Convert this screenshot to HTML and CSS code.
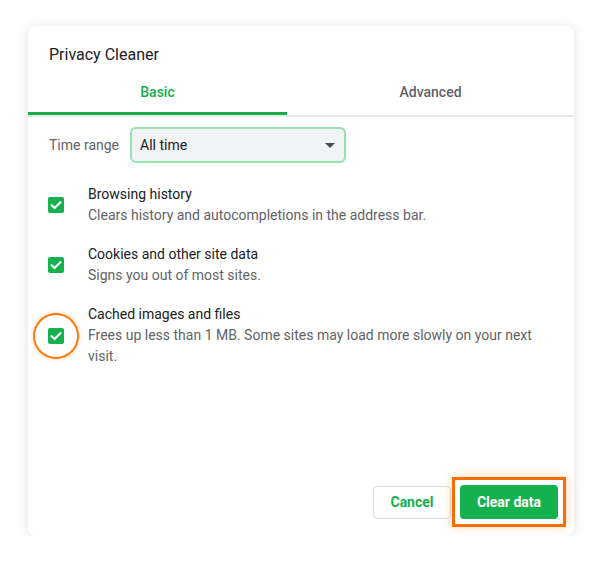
FILE: index.html
```html
<!DOCTYPE html>
<html lang="en">
<head>
<meta charset="utf-8">
<title>Privacy Cleaner</title>
<link rel="stylesheet" href="styles.css">
</head>
<body>
<div class="card">
  <div class="title">Privacy Cleaner</div>
  <div class="tabs">
    <div class="tab tab-active">Basic</div>
    <div class="tab tab-advanced">Advanced</div>
  </div>
  <div class="range">
    <span class="range-label">Time range</span>
    <div class="select">
      <span>All time</span>
      <span class="arrow"></span>
    </div>
  </div>
  <div class="items">
    <div class="item">
      <div class="cb-wrap"><span class="cb"><svg viewBox="0 0 16 16" width="16" height="16"><path d="M3.6 8.2 L6.6 11 L12.4 5.2" fill="none" stroke="#fff" stroke-width="2.2" stroke-linecap="round" stroke-linejoin="round"/></svg></span></div>
      <div class="item-text">
        <div class="item-title">Browsing history</div>
        <div class="item-desc">Clears history and autocompletions in the address bar.</div>
      </div>
    </div>
    <div class="item">
      <div class="cb-wrap"><span class="cb"><svg viewBox="0 0 16 16" width="16" height="16"><path d="M3.6 8.2 L6.6 11 L12.4 5.2" fill="none" stroke="#fff" stroke-width="2.2" stroke-linecap="round" stroke-linejoin="round"/></svg></span></div>
      <div class="item-text">
        <div class="item-title">Cookies and other site data</div>
        <div class="item-desc">Signs you out of most sites.</div>
      </div>
    </div>
    <div class="item">
      <div class="cb-wrap"><span class="cb"><svg viewBox="0 0 16 16" width="16" height="16"><path d="M3.6 8.2 L6.6 11 L12.4 5.2" fill="none" stroke="#fff" stroke-width="2.2" stroke-linecap="round" stroke-linejoin="round"/></svg></span><span class="ring"></span></div>
      <div class="item-text">
        <div class="item-title">Cached images and files</div>
        <div class="item-desc">Frees up less than 1 MB. Some sites may load more slowly on your next visit.</div>
      </div>
    </div>
  </div>
  <div class="footer">
    <button class="btn btn-cancel">Cancel</button>
    <div class="primary-wrap">
      <button class="btn btn-primary">Clear data</button>
      <span class="highlight"></span>
    </div>
  </div>
</div>
</body>
</html>
```

FILE: styles.css
```css
* { box-sizing: border-box; }
html, body {
  margin: 0;
  padding: 0;
  background: #ffffff;
}
body {
  font-family: Roboto, "Liberation Sans", Arial, sans-serif;
  color: #202124;
  padding: 26px 0 0 28px;
}
.card {
  width: 546px;
  height: 510px;
  background: #fff;
  border-radius: 8px;
  box-shadow: 0 1px 12px rgba(0, 0, 0, 0.13);
  display: flex;
  flex-direction: column;
}
.title {
  padding: 19px 21px 0;
  font-size: 16px;
  line-height: 20px;
  color: #202124;
}
.tabs {
  margin-top: 7px;
  display: flex;
  border-bottom: 2px solid #e8e8ea;
}
.tab {
  height: 43px;
  line-height: 41px;
  font-size: 14px;
  font-weight: 500;
  text-align: center;
  color: #5f6368;
}
.tab-active {
  width: 259px;
  color: #12b04b;
  border-bottom: 3px solid #12b04b;
  margin-bottom: -2px;
  line-height: 41px;
}
.tab-advanced {
  flex: 1;
}
.range {
  display: flex;
  align-items: center;
  margin-top: 10px;
  padding-left: 21px;
}
.range-label {
  font-size: 14px;
  color: #5f6368;
  width: 81px;
}
.select {
  width: 216px;
  height: 36px;
  border: 2px solid #93e2b0;
  border-radius: 6px;
  background: #f1f3f4;
  display: flex;
  align-items: center;
  justify-content: space-between;
  padding: 0 8px;
  font-size: 14px;
  color: #202124;
}
.arrow {
  width: 0;
  height: 0;
  border-left: 5.5px solid transparent;
  border-right: 5.5px solid transparent;
  border-top: 5.5px solid #4a4d51;
  margin-right: 1px;
}
.items {
  margin-top: 21px;
  display: flex;
  flex-direction: column;
  gap: 18px;
  padding-left: 20px;
  padding-right: 30px;
}
.item {
  display: flex;
  align-items: center;
  gap: 24px;
}
.cb-wrap {
  position: relative;
  width: 16px;
  height: 16px;
  flex: none;
}
.cb {
  display: block;
  width: 16px;
  height: 16px;
  border-radius: 2px;
  background: #16b14f;
}
.cb svg { display: block; }
.ring {
  position: absolute;
  left: -15px;
  top: -15px;
  width: 46px;
  height: 46px;
  border-radius: 50%;
  border: 2.5px solid #ff7a0d;
  box-shadow: 0 0 4px rgba(255, 122, 13, 0.35);
}
.item-title {
  font-size: 14px;
  line-height: 20px;
  color: #202124;
}
.item-desc {
  font-size: 14px;
  line-height: 21px;
  padding-top: 1px;
  color: #5f6368;
}
.footer {
  margin-top: auto;
  display: flex;
  justify-content: flex-end;
  align-items: center;
  gap: 9px;
  padding: 0 16px 17px 0;
}
.btn {
  font-family: Roboto, "Liberation Sans", Arial, sans-serif;
  font-size: 14px;
  font-weight: 700;
  border-radius: 4px;
  cursor: pointer;
}
.btn-cancel {
  width: 78px;
  height: 33px;
  background: #fff;
  border: 1px solid #dadce0;
  color: #12b04b;
}
.primary-wrap {
  position: relative;
}
.btn-primary {
  display: block;
  width: 98px;
  height: 34px;
  background: #13b24f;
  border: none;
  color: #fff;
}
.highlight {
  position: absolute;
  left: -8px;
  top: -8px;
  right: -8px;
  bottom: -8px;
  border: 3px solid #ff6d00;
  box-shadow: 0 0 10px rgba(255, 140, 40, 0.35);
}
```
